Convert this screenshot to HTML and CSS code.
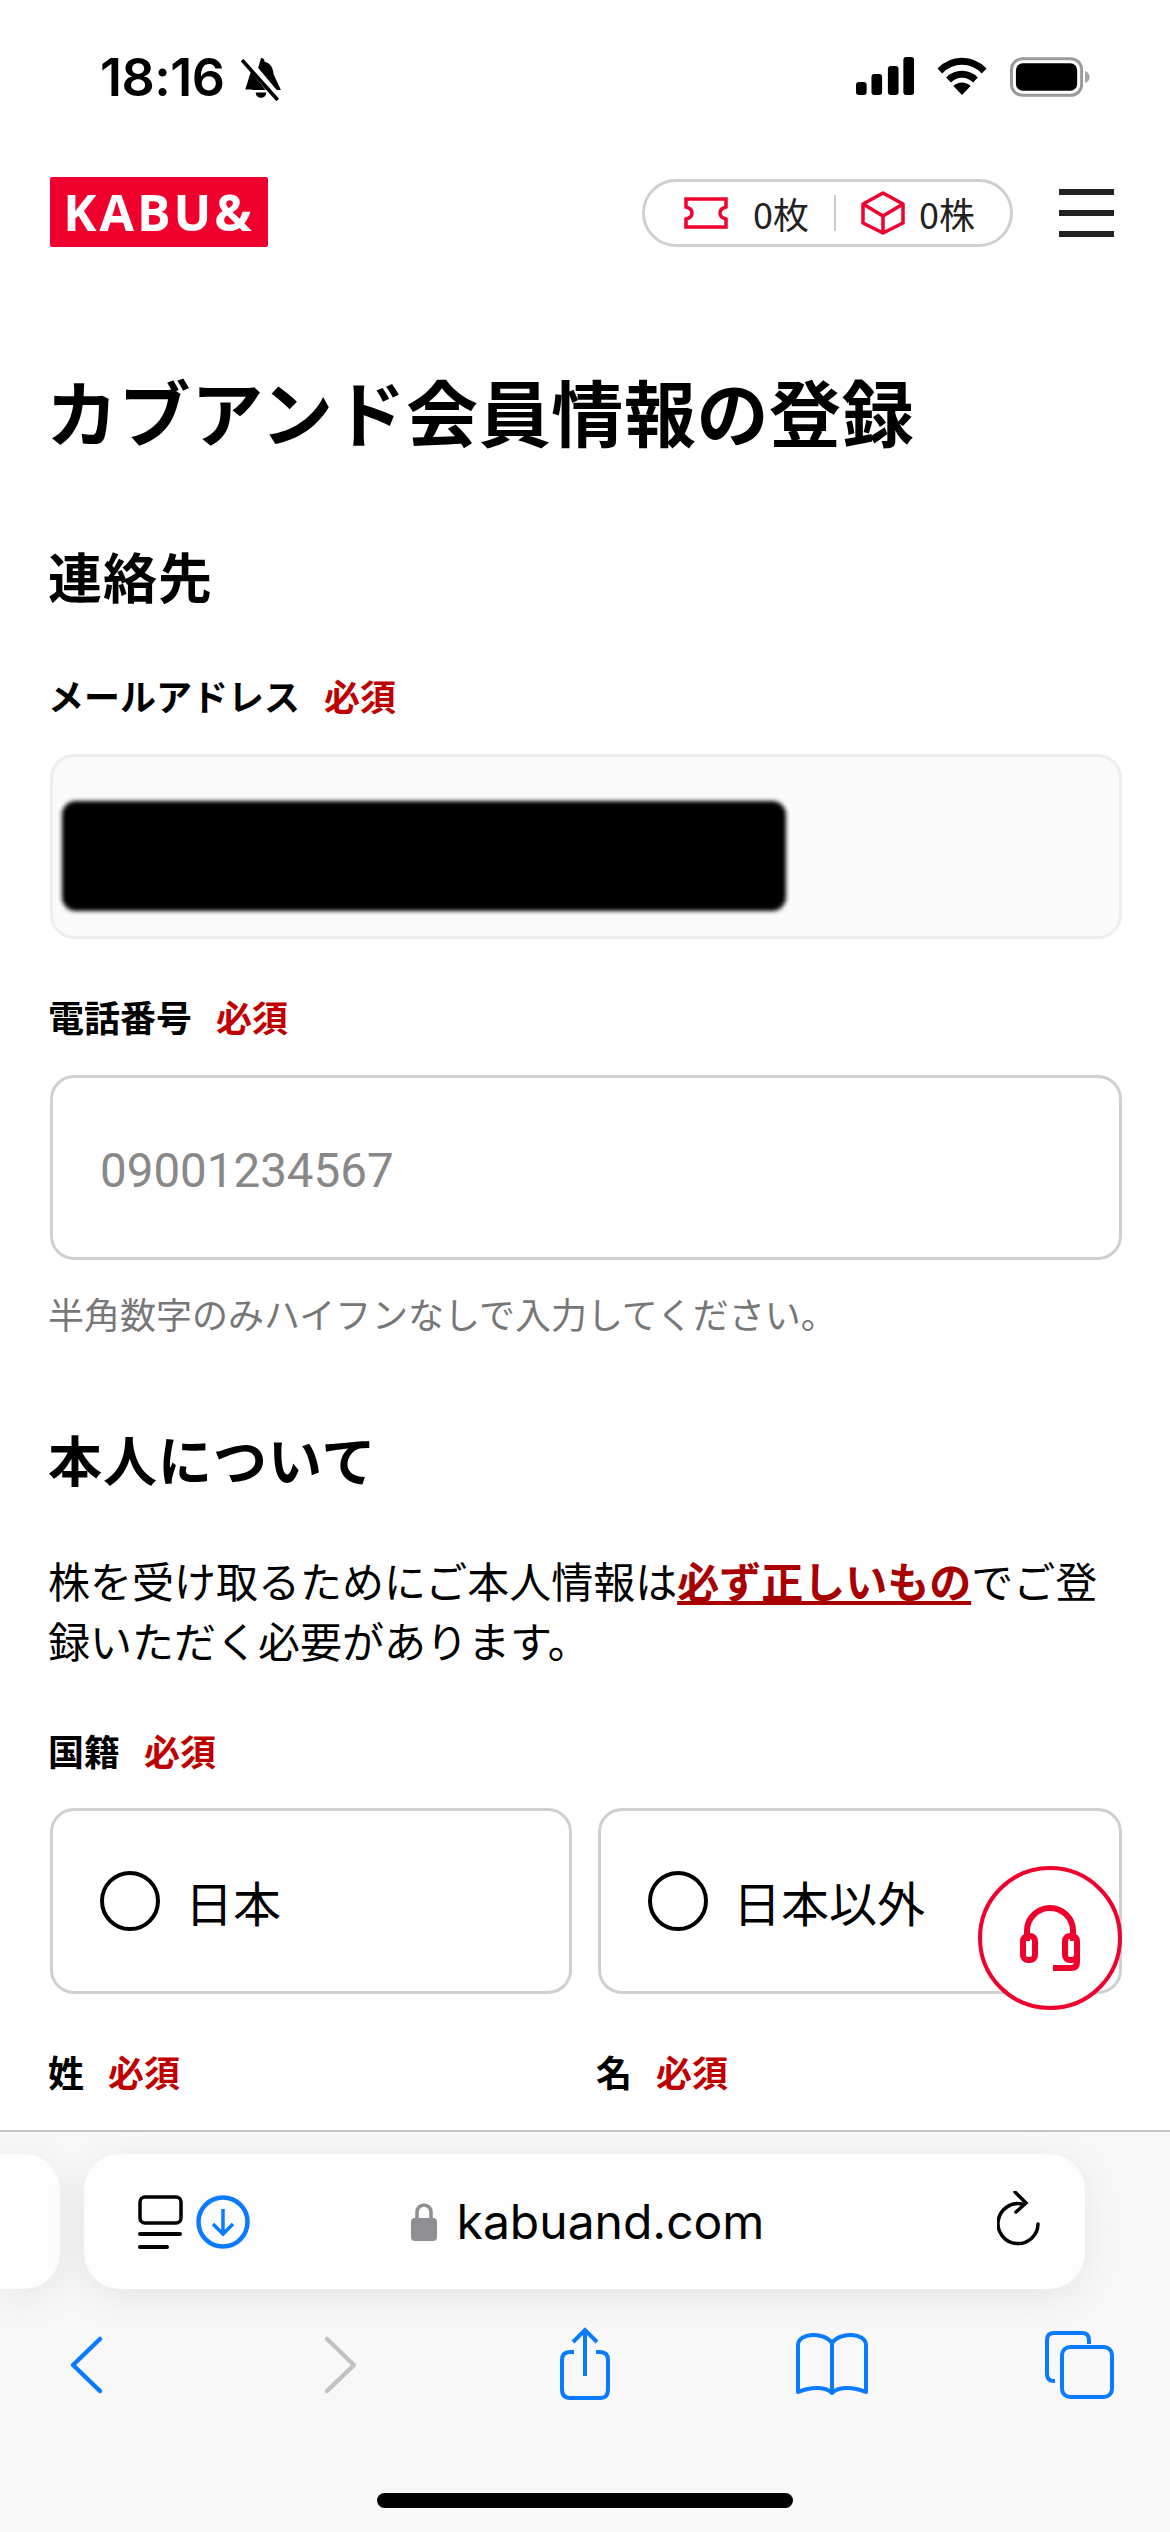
FILE: index.html
```html
<!DOCTYPE html>
<html lang="ja">
<head>
    <meta charset="UTF-8">
    <meta name="viewport" content="width=device-width, initial-scale=1.0">
    <title>カブアンド会員情報の登録</title>
    <link rel="stylesheet" href="styles.css">
</head>
<body>
    <!-- Status bar -->
    <div class="status-bar">
        <div class="status-left">
            <span class="time">18:16</span>
            <svg class="bell" width="44" height="44" viewBox="0 0 42 42">
                <path d="M21 1c2 0 3.500 1.500 3.500 3.500 6 1.500 8 6 8.500 12l7 15H12.500z" fill="#000"/>
                <path d="M12 12 6 31h7l13-8z" fill="#000"/>
                <path d="M16 34h10c0 3-2 5-5 5s-5-2-5-5z" fill="#000"/>
                <path d="M6 2l32 38" stroke="#fff" stroke-width="8"/>
                <path d="M3 3l34 38" stroke="#000" stroke-width="3.500"/>
            </svg>
        </div>
        <div class="status-right">
            <svg width="58" height="38" viewBox="0 0 60 38" preserveAspectRatio="none">
                <rect x="0" y="25" width="11" height="13" rx="3" fill="#000"/>
                <rect x="16" y="17" width="11" height="21" rx="3" fill="#000"/>
                <rect x="33" y="9" width="11" height="29" rx="3" fill="#000"/>
                <rect x="49" y="0" width="11" height="38" rx="3" fill="#000"/>
            </svg>
            <svg width="50" height="38" viewBox="0 0 52 38" preserveAspectRatio="none">
                <path d="M3 14a32 32 0 0 1 46 0" fill="none" stroke="#000" stroke-width="7"/>
                <path d="M12 23a20 20 0 0 1 28 0" fill="none" stroke="#000" stroke-width="7"/>
                <path d="M17 29a13 13 0 0 1 18 0l-9 9z" fill="#000"/>
            </svg>
            <svg width="81" height="40" viewBox="0 0 82 40">
                <rect x="1.500" y="1.500" width="71" height="37" rx="11" fill="none" stroke="#9a9a9a" stroke-width="3"/>
                <rect x="6" y="6" width="62" height="28" rx="7" fill="#000"/>
                <path d="M76 14c3 1 4.500 3 4.500 6s-1.500 5-4.500 6z" fill="#a5a5a5"/>
            </svg>
        </div>
    </div>

    <!-- Main content -->
    <div class="page">
        <header class="site-header">
            <div class="logo">KABU&amp;</div>
            <div class="header-right">
                <div class="holdings">
                    <svg class="ticket" width="44" height="32" viewBox="0 0 44 32">
                        <path d="M2 2h40v8c-4 1-6 3-6 6s2 5 6 6v8H2v-8c4-1 6-3 6-6s-2-5-6-6z" fill="none" stroke="#f0002d" stroke-width="3.500"/>
                    </svg>
                    <span class="holdings-count">0枚</span>
                    <span class="holdings-sep"></span>
                    <svg class="box" width="44" height="44" viewBox="0 0 44 44">
                        <path d="M22 2 42 13v19L22 42 2 32V13zM2 13l20 12 20-12M22 25v17" fill="none" stroke="#f0002d" stroke-width="3.500" stroke-linejoin="round"/>
                    </svg>
                    <span class="holdings-count">0株</span>
                </div>
                <div class="hamburger"><span></span><span></span><span></span></div>
            </div>
        </header>

        <div class="content">
            <h1>カブアンド会員情報の登録</h1>

            <h2 class="section-first">連絡先</h2>
            <div class="field-label"><span>メールアドレス</span><span class="required">必須</span></div>
            <div class="input-box input-disabled"><div class="redacted"></div></div>

            <div class="field-label"><span>電話番号</span><span class="required">必須</span></div>
            <div class="input-box"><span class="placeholder">09001234567</span></div>
            <p class="hint">半角数字のみハイフンなしで入力してください。</p>

            <h2>本人について</h2>
            <p class="lead">株を受け取るためにご本人情報は<a class="must" href="#">必ず正しいもの</a>でご登録いただく必要があります。</p>

            <div class="field-label"><span>国籍</span><span class="required">必須</span></div>
            <div class="two-col">
                <div class="radio-card"><span class="radio"></span>日本</div>
                <div class="radio-card"><span class="radio"></span>日本以外</div>
            </div>

            <div class="two-col name-labels">
                <div class="field-label"><span>姓</span><span class="required">必須</span></div>
                <div class="field-label"><span>名</span><span class="required">必須</span></div>
            </div>
        </div>

        <!-- Support button -->
        <div class="support-btn">
            <svg width="62" height="66" viewBox="0 0 62 66">
                <path d="M8 36V26a23 23 0 0 1 46 0v10" fill="none" stroke="#f0002d" stroke-width="6"/>
                <rect x="4" y="31" width="12" height="24" rx="5" fill="none" stroke="#f0002d" stroke-width="6"/>
                <rect x="46" y="31" width="12" height="24" rx="5" fill="none" stroke="#f0002d" stroke-width="6"/>
                <path d="M58 50v7c0 4-2 6-6 6H34" fill="none" stroke="#f0002d" stroke-width="6"/>
            </svg>
        </div>
    </div>

    <!-- Safari toolbar -->
    <div class="browser-bar">
        <div class="url-row">
            <div class="tab-peek"></div>
            <div class="url-pill">
                <div class="url-left">
                    <svg width="46" height="56" viewBox="0 0 46 56">
                        <rect x="2" y="2" width="41" height="26" rx="5" fill="none" stroke="#000" stroke-width="3.500"/>
                        <rect x="0" y="37" width="44" height="4" rx="2" fill="#000"/>
                        <rect x="0" y="50" width="31" height="4" rx="2" fill="#000"/>
                    </svg>
                    <svg width="54" height="54" viewBox="0 0 54 54">
                        <circle cx="27" cy="27" r="24.500" fill="none" stroke="#0a7aff" stroke-width="4.500"/>
                        <path d="M27 14v25M17 29l10 10 10-10" fill="none" stroke="#0a7aff" stroke-width="3.500"/>
                    </svg>
                </div>
                <div class="url-text">
                    <svg width="26" height="38" viewBox="0 0 26 38">
                        <path d="M6 16V9a7 7 0 0 1 14 0v7" fill="none" stroke="#8e8e93" stroke-width="3.500"/>
                        <rect x="0" y="15" width="26" height="23" rx="4" fill="#8e8e93"/>
                    </svg>
                    <span>kabuand.com</span>
                </div>
                <svg class="reload" width="46" height="56" viewBox="0 0 46 56">
                    <path d="M26 11A20 20 0 1 0 42 31" fill="none" stroke="#000" stroke-width="3.500" stroke-linecap="round" transform="translate(-1 2)"/>
                    <path d="M18 1l11 11-10 9" fill="none" stroke="#000" stroke-width="3.500" stroke-linecap="round"/>
                </svg>
            </div>
        </div>
        <div class="nav-row">
            <svg width="80" height="76" viewBox="0 0 80 76">
                <path d="M54 12 27 38l27 26" fill="none" stroke="#0a7aff" stroke-width="4.500" stroke-linecap="round" stroke-linejoin="round"/>
            </svg>
            <svg width="80" height="76" viewBox="0 0 80 76">
                <path d="M26 12l27 26-27 26" fill="none" stroke="#c2c2c4" stroke-width="4.500" stroke-linecap="round" stroke-linejoin="round"/>
            </svg>
            <svg width="80" height="76" viewBox="0 0 80 76">
                <path d="M29 25h-4c-6 0-8 3-8 8v29c0 6 3 9 8 9h30c6 0 8-3 8-9V33c0-5-2-8-8-8h-4" fill="none" stroke="#0a7aff" stroke-width="4"/>
                <path d="M40 49V4M28 15 40 3l12 12" fill="none" stroke="#0a7aff" stroke-width="4"/>
            </svg>
            <svg width="80" height="76" viewBox="0 0 80 76">
                <path d="M40 66c-6-6-19-7-34-1V18C6 6 32 4 40 16c8-12 34-10 34 2v47c-15-6-28-5-34 1zM40 16v50" fill="none" stroke="#0a7aff" stroke-width="4" stroke-linejoin="round"/>
            </svg>
            <svg width="80" height="76" viewBox="0 0 80 76">
                <path d="M15 54h-1c-5 0-7-3-7-7V13c0-5 3-7 7-7h28c5 0 7 3 7 7v4" fill="none" stroke="#0a7aff" stroke-width="4"/>
                <rect x="22" y="20" width="50" height="50" rx="8" fill="none" stroke="#0a7aff" stroke-width="4"/>
            </svg>
        </div>
        <div class="home-indicator"></div>
    </div>
</body>
</html>
```

FILE: styles.css
```css
/* General */
* { box-sizing: border-box; }
body {
    margin: 0;
    width: 1170px;
    height: 2532px;
    display: flex;
    flex-direction: column;
    overflow: hidden;
    background-color: #fff;
    color: #000;
    font-family: "Noto Sans CJK JP", "Noto Sans", sans-serif;
}

/* Status bar */
.status-bar { height: 150px; flex: none; display: flex; justify-content: space-between; padding: 57px 79px 0 100px; }
.status-left { display: flex; align-items: flex-start; gap: 14px; }
.time { font-family: Inter, sans-serif; font-size: 52px; font-weight: 600; line-height: 42px; letter-spacing: -0.5px; }
.status-right { display: flex; align-items: flex-start; gap: 23px; }

/* Page */
.page { position: relative; flex: 1; min-height: 0; overflow: hidden; }
.site-header { height: 124px; padding: 0 56px 0 50px; display: flex; align-items: center; justify-content: space-between; }
.logo { width: 218px; height: 70px; background-color: #f0002d; color: #fff; font-family: "Open Sans", sans-serif; font-size: 50px; font-weight: 700; line-height: 70px; text-align: center; letter-spacing: 3px; border-radius: 2px; }
.header-right { display: flex; align-items: center; gap: 46px; margin-top: 2px; }
.holdings { width: 371px; height: 68px; border: 3px solid #d0d0d0; border-radius: 34px; display: flex; align-items: center; padding-left: 39px; }
.holdings-count { font-size: 36px; line-height: 1; color: #222; }
.ticket { margin-right: 25px; }
.holdings-sep { width: 2px; height: 36px; background-color: #ccc; margin: 0 25px 0 25px; }
.box { margin-right: 14px; }
.hamburger { width: 55px; display: flex; flex-direction: column; gap: 15px; }
.hamburger span { height: 6px; background-color: #222; }

/* Form */
.content { padding: 0 48px 0 50px; }
h1 { margin: 86px 0 0 -4px; font-size: 72px; font-weight: 700; line-height: 100px; letter-spacing: 0.6px; }
h2 { margin: 86px 0 0 -2px; font-size: 54px; font-weight: 700; line-height: 70px; letter-spacing: 1px; }
h2.section-first { margin-top: 81px; }
.field-label { margin: 55px 0 0 -2px; display: flex; gap: 24px; font-size: 36px; font-weight: 700; line-height: 50px; }
h2 + .field-label { margin-top: 59px; }
.input-box + .field-label { margin-top: 52px; }
.required { color: #c00000; }
.input-box { margin-top: 34px; height: 185px; border: 3px solid #d0d0d0; border-radius: 24px; display: flex; align-items: center; padding-left: 47px; }
.input-disabled { background-color: #fafafa; border-color: #eee; padding-left: 9px; }
.redacted { width: 724px; height: 110px; margin-top: 18px; background-color: #000; border-radius: 14px; filter: blur(2px); }
.placeholder { padding-top: 6px; font-family: Roboto, sans-serif; font-size: 47.5px; color: #888; }
.hint { margin: 28px 0 0 -2px; font-size: 36px; line-height: 50px; color: #777; }
.lead { margin: 56px 0 0 -2px; font-size: 42px; line-height: 60px; }
.must { color: #a80000; font-weight: 700; text-decoration: underline; }
.field-label + .two-col { margin-top: 33px; }
.two-col { display: grid; grid-template-columns: 522px 524px; gap: 26px; }
.radio-card { height: 186px; border: 3px solid #d0d0d0; border-radius: 24px; display: flex; align-items: center; gap: 25px; padding-left: 47px; font-size: 48px; }
.radio { width: 60px; height: 60px; border: 4px solid #000; border-radius: 50%; }
.name-labels .field-label { margin-top: 52px; margin-left: -2px; }

/* Floating support button */
.support-btn { position: absolute; left: 978px; top: 1716px; width: 144px; height: 144px; border: 4px solid #f0002d; border-radius: 50%; background-color: #fff; display: flex; align-items: center; justify-content: center; }

/* Browser toolbar */
.browser-bar { height: 402px; flex: none; background-color: #f8f8f9; border-top: 2px solid #c4c4c6; display: flex; flex-direction: column; }
.url-row { display: flex; gap: 24px; height: 135px; margin-top: 22px; flex: none; }
.tab-peek { width: 60px; background-color: #fdfdfd; border-radius: 0 36px 36px 0; box-shadow: 0 8px 40px rgba(0, 0, 0, 0.08); }
.url-pill { position: relative; width: 1001px; background-color: #fdfdfd; border-radius: 36px; box-shadow: 0 8px 40px rgba(0, 0, 0, 0.08); display: flex; align-items: center; justify-content: center; }
.url-left { position: absolute; left: 54px; top: 41px; display: flex; gap: 12px; }
.url-text { display: flex; align-items: center; gap: 20px; margin-left: 6px; font-family: Inter, sans-serif; font-size: 48px; }
.reload { position: absolute; right: 42px; top: 37px; }
.nav-row { display: grid; grid-template-columns: 255px 244px 247px 248px 80px; padding-left: 46px; margin-top: 38px; }
.home-indicator { width: 416px; height: 15px; background-color: #000; border-radius: 8px; margin: auto auto 24px; }
```
